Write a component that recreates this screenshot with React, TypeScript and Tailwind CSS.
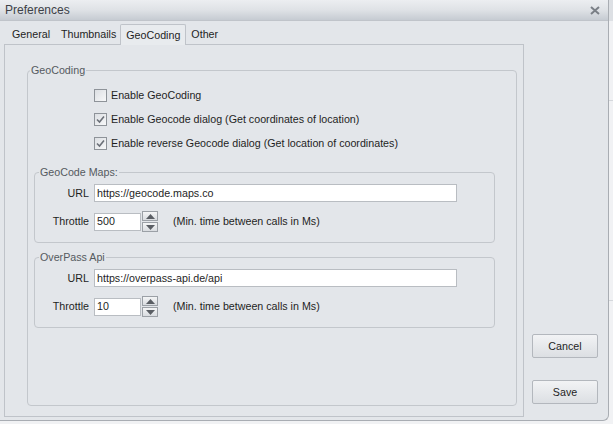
import React from "react";

const font = { fontFamily: '"Liberation Sans", Arial, sans-serif' };

function CheckBox({ checked, label }: { checked: boolean; label: string }) {
  return (
    <div className="flex items-center h-[13px] gap-[4px]">
      <div className="w-[13px] h-[13px] border border-[#8e9399] bg-gradient-to-br from-[#dcdfe3] to-[#f7f8f9] flex items-center justify-center">
        {checked && (
          <svg width="9" height="9" viewBox="0 0 9 9">
            <path d="M1 4.5 L3.5 7 L8 1.5" fill="none" stroke="#6b7078" strokeWidth="1.6" />
          </svg>
        )}
      </div>
      <span className="text-[10.7px] text-[#1e1e1e] leading-none">{label}</span>
    </div>
  );
}

function Spinner() {
  return (
    <div className="flex flex-col gap-[1px] ml-[1px]">
      <div className="w-[16px] h-[10px] border border-[#9ba0a6] bg-gradient-to-b from-[#f4f5f6] to-[#d9dce0] flex items-center justify-center">
        <svg width="9" height="5" viewBox="0 0 9 5">
          <path d="M0 5 L4.5 0 L9 5 Z" fill="#5a5e64" />
        </svg>
      </div>
      <div className="w-[16px] h-[10px] border border-[#9ba0a6] bg-gradient-to-b from-[#f4f5f6] to-[#d9dce0] flex items-center justify-center">
        <svg width="9" height="5" viewBox="0 0 9 5">
          <path d="M0 0 L9 0 L4.5 5 Z" fill="#5a5e64" />
        </svg>
      </div>
    </div>
  );
}

function ServiceGroup({ title, url, throttle, mt }: { title: string; url: string; throttle: string; mt: string }) {
  return (
    <fieldset className={`border border-[#c3c7cc] rounded-[4px] ml-[6px] mr-[21px] pb-[10px] ${mt}`}>
      <legend className="ml-[4px] px-[1px] text-[10.7px] text-[#555a60] leading-[14px]">{title}</legend>
      <div className="flex items-center mt-[5px]">
        <span className="w-[59px] text-right pr-[5px] text-[10.7px] text-[#1e1e1e]">URL</span>
        <div className="w-[363px] h-[18px] border border-[#b9bdc2] bg-white flex items-center px-[2px] text-[10.7px] text-[#1e1e1e]">
          {url}
        </div>
      </div>
      <div className="flex items-center mt-[9px]">
        <span className="w-[59px] text-right pr-[5px] text-[10.7px] text-[#1e1e1e]">Throttle</span>
        <div className="w-[47px] h-[18px] border border-[#b9bdc2] bg-white flex items-center px-[2px] text-[10.7px] text-[#1e1e1e]">
          {throttle}
        </div>
        <Spinner />
        <span className="ml-[15px] text-[10.7px] text-[#1e1e1e]">(Min. time between calls in Ms)</span>
      </div>
    </fieldset>
  );
}

function Button({ label }: { label: string }) {
  return (
    <div className="w-[66px] h-[24px] border border-[#b3b7bd] rounded-[2px] bg-gradient-to-b from-[#f2f3f5] to-[#dcdfe3] flex items-center justify-center text-[10.7px] text-[#1e1e1e]">
      {label}
    </div>
  );
}

export default function App() {
  return (
    <div className="w-[613px] h-[424px] flex bg-[#f1f2f4]" style={font}>
      <div className="w-[609px] h-[421px] flex flex-col bg-[#e3e6ea] border-r border-b border-[#a9adb3] rounded-br-[6px] overflow-hidden">
        <div className="h-[21px] flex items-center justify-between px-[5px] bg-gradient-to-b from-[#eceef1] via-[#dfe2e6] to-[#c6cbd2] border-b border-[#c0c4ca]">
          <span className="text-[12px] text-[#3d4147]">Preferences</span>
          <svg width="10" height="9" viewBox="0 0 10 9" className="mr-[3px]">
            <path d="M1 1 L9 8 M9 1 L1 8" stroke="#7a7f86" strokeWidth="2" />
          </svg>
        </div>
        <div className="flex flex-1 pl-[4px]">
          <div className="w-[520px] flex flex-col">
            <div className="h-[23px] flex items-end text-[10.7px] text-[#1e1e1e]">
              <div className="h-[20px] px-[8px] flex items-center">General</div>
              <div className="h-[20px] ml-[2px] px-[1px] flex items-center">Thumbnails</div>
              <div className="h-[21px] ml-[3px] px-[5px] flex items-center bg-[#e8ebee] border border-b-0 border-[#bfc3c9] rounded-t-[2px] relative top-[1px]">
                GeoCoding
              </div>
              <div className="h-[20px] px-[5px] flex items-center">Other</div>
            </div>
            <div className="h-[373px] border border-[#bfc3c9] pt-[18px] pl-[22px] pr-[6px] pb-[10px] flex">
              <fieldset className="flex-1 border border-[#c3c7cc] rounded-[4px]">
                <legend className="ml-[2px] px-[1px] text-[10.7px] text-[#555a60] leading-[14px]">GeoCoding</legend>
                <div className="flex flex-col gap-[11px] pl-[66px] mt-[12px]">
                  <CheckBox checked={false} label="Enable GeoCoding" />
                  <CheckBox checked label="Enable Geocode dialog (Get coordinates of location)" />
                  <CheckBox checked label="Enable reverse Geocode dialog (Get location of coordinates)" />
                </div>
                <ServiceGroup title="GeoCode Maps:" url="https://geocode.maps.co" throttle="500" mt="mt-[15px]" />
                <ServiceGroup title="OverPass Api" url="https://overpass-api.de/api" throttle="10" mt="mt-[7px]" />
              </fieldset>
            </div>
          </div>
          <div className="flex flex-col pl-[8px] pt-[313px] gap-[22px]">
            <Button label="Cancel" />
            <Button label="Save" />
          </div>
        </div>
      </div>
      <div className="flex-1 flex flex-col">
        <div className="h-[21px] bg-[#dde0e4]" />
        <div className="h-[80px] border-b border-[#d5d8dc]" />
        <div className="h-[200px] border-b border-[#d5d8dc]" />
      </div>
    </div>
  );
}
